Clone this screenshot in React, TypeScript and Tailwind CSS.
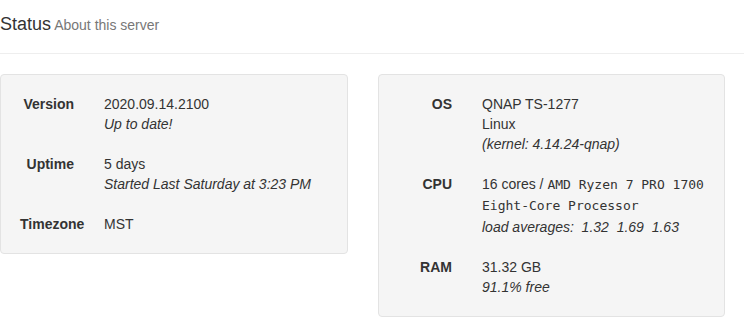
import type { ReactNode } from 'react'

type Row = {
  label: string
  lines: ReactNode[]
}

const mono = "font-['DejaVu_Sans_Mono',monospace] text-[13px]"

const leftRows: Row[] = [
  { label: 'Version', lines: ['2020.09.14.2100', <i key="a">Up to date!</i>] },
  { label: 'Uptime', lines: ['5 days', <i key="a">Started Last Saturday at 3:23 PM</i>] },
  { label: 'Timezone', lines: ['MST'] },
]

const rightRows: Row[] = [
  { label: 'OS', lines: ['QNAP TS-1277', 'Linux', <i key="a">(kernel: 4.14.24-qnap)</i>] },
  {
    label: 'CPU',
    lines: [
      <span key="a">
        16 cores / <span className={mono}>AMD Ryzen 7 PRO 1700</span>
      </span>,
      <span key="b" className={`${mono} leading-[22px] block`}>
        Eight-Core Processor
      </span>,
      <i key="c" className="whitespace-pre">load averages:  1.32  1.69  1.63</i>,
    ],
  },
  { label: 'RAM', lines: ['31.32 GB', <i key="a">91.1% free</i>] },
]

function Well({ rows, width }: { rows: Row[]; width: string }) {
  return (
    <div className={`${width} bg-[#f5f5f5] border border-[#e3e3e3] rounded-[4px] p-[19px] flex flex-col gap-5`}>
      {rows.map((row) => (
        <div key={row.label} className="flex gap-[30px]">
          <div className="w-[54px] shrink-0 text-right font-bold whitespace-nowrap">{row.label}</div>
          <div className="flex flex-col">
            {row.lines.map((line, i) => (
              <div key={i}>{line}</div>
            ))}
          </div>
        </div>
      ))}
    </div>
  )
}

export default function App() {
  return (
    <div className="w-[744px] h-[328px] overflow-hidden bg-white text-[#333] text-[14px] leading-[20px] font-['Liberation_Sans',Arial,sans-serif]">
      <div className="pt-[13px] pb-[17px] border-b border-[#eee] leading-[22px]">
        <span className="text-[18px]">Status</span>{' '}
        <span className="text-[14px] text-[#777]">About this server</span>
      </div>
      <div className="mt-5 flex items-start gap-[30px]">
        <Well rows={leftRows} width="w-[348px]" />
        <Well rows={rightRows} width="w-[347px]" />
      </div>
    </div>
  )
}
